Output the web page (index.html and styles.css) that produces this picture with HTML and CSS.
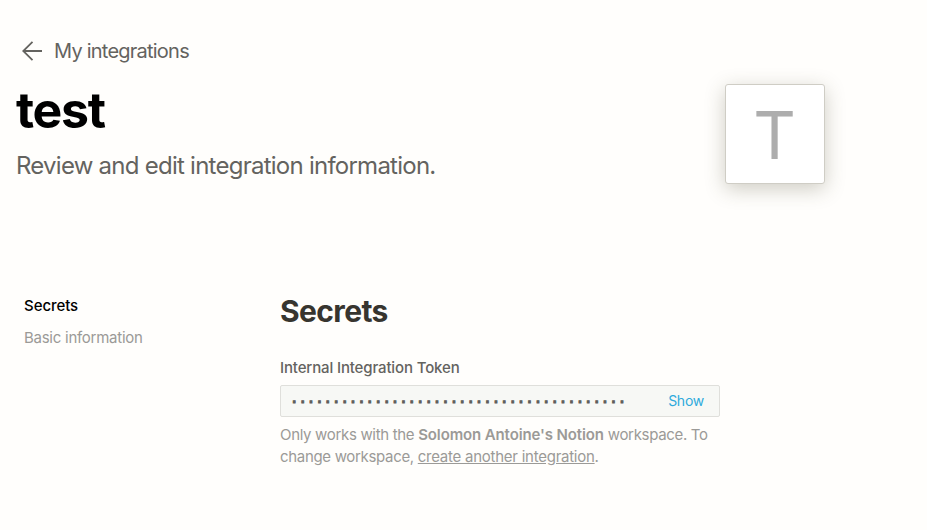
FILE: index.html
```html
<!DOCTYPE html>
<html lang="en">
<head>
<meta charset="utf-8">
<title>test</title>
<link rel="stylesheet" href="styles.css">
</head>
<body>
<main class="page">
  <header class="header">
    <div class="intro">
      <a class="back"><svg class="arrow" width="20" height="20" viewBox="0 0 20 20"><path d="M20 10H1M10.5 .8L1.2 10L10.5 19.2"/></svg><span class="back-label">My integrations</span></a>
      <h1 class="title"><span>test</span></h1>
      <p class="subtitle"><span>Review and edit integration information.</span></p>
    </div>
    <div class="logo">T</div>
  </header>
  <div class="content">
    <nav class="nav">
      <a class="nav-item active">Secrets</a>
      <a class="nav-item">Basic information</a>
    </nav>
    <section class="secrets">
      <h2 class="section-title">Secrets</h2>
      <label class="label">Internal Integration Token</label>
      <div class="token"><span class="mask">········································</span><a class="show">Show</a></div>
      <p class="help"><span class="line">Only works with the <b>Solomon Antoine's Notion</b> workspace. To</span> <span class="line">change workspace, <a class="link">create another integration</a>.</span></p>
    </section>
  </div>
</main>
</body>
</html>
```
FILE: styles.css
```css
* { box-sizing: border-box; }
body { margin: 0; background: #fffefc; font-family: Inter, sans-serif; }
.page { height: 530px; padding: 36px 0 0 16px; }
.header { display: flex; width: 809px; height: 256px; justify-content: space-between; }
.back { display: flex; align-items: center; height: 30px; gap: 12px; padding-left: 6px; font-size: 20px; letter-spacing: -.77px; color: #64635f; }
.arrow { fill: none; stroke: #64635f; stroke-width: 1.8; }
.title { margin: 13px 0 0; font-size: 50px; line-height: 62px; letter-spacing: -1.3px; color: #000; }
.subtitle { margin: 9px 0 0; font-size: 24px; line-height: 32px; letter-spacing: -.75px; color: #64635f; }
.logo { width: 100px; height: 100px; margin-top: 48px; padding-right: 1px; background: #fff; border: 1px solid #cfcdc5; border-radius: 3px; box-shadow: 0 5px 20px rgba(75,70,45,.27); color: #adadad; font-size: 66px; line-height: 101px; text-align: center; }
.content { display: flex; }
.nav { width: 264px; padding-left: 8px; }
.nav-item { display: block; height: 32px; font-size: 15px; line-height: 28px; letter-spacing: -.26px; color: #9b9a97; }
.active { color: #000; font-weight: 500; letter-spacing: -.06px; }
.secrets { width: 440px; }
.section-title { margin: 0; font-size: 30px; line-height: 38px; letter-spacing: -.62px; color: #37352f; }
.label { display: block; margin-top: 28px; height: 27px; font-size: 15px; line-height: 20px; font-weight: 500; letter-spacing: -.14px; color: #64635f; }
.token { display: flex; justify-content: space-between; align-items: center; width: 440px; height: 32px; padding: 0 15px 0 9px; border: 1px solid #dfdfdb; border-radius: 2px; background: #f7f8f5; }
.mask { padding-top: 1px; font: bold 14px/20px "Liberation Mono", monospace; -webkit-text-stroke: .9px #5f5e5b; color: #5f5e5b; }
.show { padding-bottom: 2px; font-size: 14px; letter-spacing: -.25px; color: #2eaadc; }
.help { margin: 7px 0 0; font-size: 15px; line-height: 22px; color: #9b9a97; letter-spacing: -.32px; white-space: nowrap; }
.line { display: block; }
.help b { font-weight: 600; letter-spacing: -.12px; }
.link { letter-spacing: -.25px; text-decoration: underline; }
```
